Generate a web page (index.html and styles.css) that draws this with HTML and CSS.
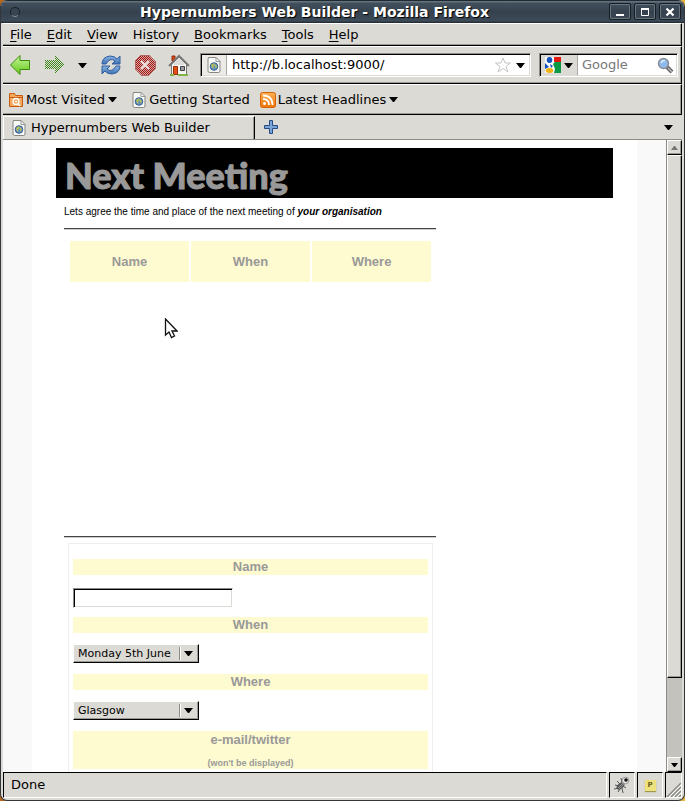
FILE: index.html
```html
<!DOCTYPE html>
<html lang="en">
<head>
<meta charset="utf-8">
<title>Hypernumbers Web Builder</title>
<link rel="stylesheet" href="styles.css">
</head>
<body>
<svg class="defs" aria-hidden="true">
  <defs>
    <linearGradient id="green" x2="0" y2="1"><stop stop-color="#c8f59a"/><stop offset="1" stop-color="#62c818"/></linearGradient>
    <linearGradient id="blue" x2="0" y2="1"><stop stop-color="#8cb3e0"/><stop offset="1" stop-color="#3c70b4"/></linearGradient>
    <linearGradient id="orange" x2="0" y2="1"><stop stop-color="#ffb056"/><stop offset="1" stop-color="#ee7406"/></linearGradient>
    <pattern id="greendots" width="2" height="2" patternUnits="userSpaceOnUse"><path d="M0 0h1v1h-1zM1 1h1v1h-1z" fill="#3f8a1c"/></pattern>
    <pattern id="reddots" width="2" height="2" patternUnits="userSpaceOnUse"><path d="M0 0h1v1H0zM1 1h1v1H1z" fill="#a01414"/></pattern>
    <symbol id="caret" viewBox="0 0 9 5"><path d="M0 0h9L5 5H4z"/></symbol>
    <symbol id="page" viewBox="0 0 14 16">
      <path d="M1.500 .5h7.500l4 4v9.500q0 1.500-1.500 1.500h-9q-1.500 0-1.500-1.500V2q0-1.500 1.500-1.500z" fill="#f8f8f6" stroke="#858783"/>
      <path d="M9 .5v4h4z" fill="#fff" stroke="#999b97"/>
      <circle cx="7" cy="9.500" r="3.800" fill="#5f8fc4" stroke="#3a5f92"/>
      <path d="M4 8l3-2 1 2-2 2 1 2-2-1zM8 7l2 2-1 3-1-2z" fill="#b2bf58"/>
    </symbol>
  </defs>
</svg>
<div class="window">
  <header class="titlebar">
    <span class="orb"></span>
    <h1 class="title">Hypernumbers Web Builder - Mozilla Firefox</h1>
    <div class="winbuttons">
      <button type="button" aria-label="Minimize"><svg width="12" height="12"><path d="M2 8h8v2H2z" fill="#fff"/></svg></button>
      <button type="button" aria-label="Maximize"><svg width="12" height="12"><path d="M2.500 2.500h7v7h-7z" fill="none" stroke="#fff"/><path d="M2 2h8v2H2z" fill="#fff"/></svg></button>
      <button type="button" aria-label="Close"><svg width="12" height="12"><path d="M2.500 2.500l7 7M9.500 2.500l-7 7" stroke="#fff" stroke-width="2.200"/></svg></button>
    </div>
  </header>

  <nav class="bar menubar">
    <button type="button"><u>F</u>ile</button>
    <button type="button"><u>E</u>dit</button>
    <button type="button"><u>V</u>iew</button>
    <button type="button">Hi<u>s</u>tory</button>
    <button type="button"><u>B</u>ookmarks</button>
    <button type="button"><u>T</u>ools</button>
    <button type="button"><u>H</u>elp</button>
  </nav>

  <div class="bar toolbar">
    <div class="navbuttons">
      <button type="button" aria-label="Back"><svg width="22" height="22"><path d="M1.500 11L11 1.500v5h9.500v9H11v5z" fill="url(#green)" stroke="#3c8a0c" stroke-linejoin="round"/></svg></button>
      <button type="button" aria-label="Forward"><svg width="22" height="22" shape-rendering="crispEdges"><path d="M21 11L12 1v5H2v9h10v6z" fill="url(#greendots)"/></svg></button>
      <button type="button" class="small" aria-label="History list"><svg width="9" height="5"><use href="#caret"/></svg></button>
      <button type="button" aria-label="Reload"><svg width="22" height="22">
        <path d="M2 10Q2 3 10 2q5 0 7 3l3-3v8h-8l3-3Q10 3 6 10z" fill="url(#blue)" stroke="#2f5f9f" stroke-linejoin="round"/>
        <path d="M20 12q0 7-8 8-5 0-7-3l-3 3v-8h8l-3 3q5 4 9-3z" fill="url(#blue)" stroke="#2f5f9f" stroke-linejoin="round"/></svg></button>
      <button type="button" aria-label="Stop"><svg width="22" height="22"><path d="M7 1h8l6 6v8l-6 6H7l-6-6V7z" fill="#d9a8a2"/><path d="M7 1h8l6 6v8l-6 6H7l-6-6V7z" fill="url(#reddots)" stroke="#b06a66" shape-rendering="crispEdges"/><path d="M7 7l8 8M15 7l-8 8" stroke="#ece2e0" stroke-width="2.200"/></svg></button>
      <button type="button" aria-label="Home"><svg width="22" height="22">
        <path d="M4 2h3v5H4z" fill="#d84818" stroke="#8f2c08"/>
        <path d="M3.500 10.500L11 3l7.500 7.500v10h-15z" fill="#f4f4f2" stroke="#777"/>
        <path d="M1 12L11 2l10 10" fill="none" stroke="#777" stroke-width="2"/>
        <path d="M6 9l5-5 5 5v2H6z" fill="#dcdcda"/>
        <path d="M5.500 12.500h4v8h-4z" fill="#e2501a" stroke="#9b3008"/><path d="M12.500 12.500h4v4h-4z" fill="#9aa0a4" stroke="#444"/>
        <path d="M2 21h4M10 21h10" stroke="#83b44c" stroke-width="2"/></svg></button>
    </div>
    <div class="sunken address">
      <span class="fieldicon"><svg width="14" height="16"><use href="#page"/></svg></span>
      <input type="text" aria-label="Address" value="http://b.localhost:9000/">
      <svg width="16" height="16"><path d="M8 1l2 5h5.500l-4.500 3.500 2 5.500-5-3.500L3 15l2-5.500L.5 6H6z" fill="#fff" stroke="#c4c4c4"/></svg>
      <svg width="9" height="5"><use href="#caret"/></svg>
    </div>
    <div class="sunken search">
      <span class="fieldicon engine">
        <svg width="16" height="16"><path d="M0 0h16v16H0z" fill="#fff"/><path d="M9 0h7v5H9z" fill="#e01b12"/><path d="M8 7l2-2h6v11H9l1-4z" fill="#0b9a45"/><ellipse cx="4.500" cy="3" rx="2.800" ry="3" fill="#1453bd"/><path d="M0 6l4 4-4 2z" fill="#1453bd"/><ellipse cx="4.500" cy="13.500" rx="3.800" ry="2.500" fill="#f0b414"/><path d="M5 7l3 2-2 2z" fill="#1453bd"/></svg>
        <svg width="9" height="5"><use href="#caret"/></svg>
      </span>
      <input type="text" aria-label="Search" placeholder="Google">
      <svg width="17" height="17"><path d="M10 10l5 5" stroke="#666" stroke-width="4"/><path d="M11 11l4 4" stroke="#b8b8b8" stroke-width="1.500"/><circle cx="6.500" cy="6.500" r="5" fill="#8db9ed" stroke="#8b8f94" stroke-width="1.500"/><path d="M4 6q1-3 4-2" stroke="#dcebfb" stroke-width="1.500" fill="none"/></svg>
    </div>
  </div>

  <nav class="bar bookmarks">
    <button type="button"><svg width="16" height="16"><path d="M1.500 14.500v-13h5l1 2h7v11z" fill="#f4a860" stroke="#c85a0c"/><path d="M1 5.500h13" stroke="#c85a0c"/><circle cx="8" cy="9.500" r="3" fill="none" stroke="#fff" stroke-width="1.300"/><path d="M10 12l2 2" stroke="#fff" stroke-width="1.500"/><circle cx="8" cy="9.500" r="1" fill="#fff"/></svg><span>Most Visited</span><svg class="more" width="9" height="5"><use href="#caret"/></svg></button>
    <a href="#start"><svg width="16" height="16"><use href="#page"/></svg><span>Getting Started</span></a>
    <button type="button"><svg width="16" height="16"><rect x=".5" y=".5" width="15" height="15" rx="2" fill="url(#orange)" stroke="#d4640a"/><circle cx="4.500" cy="11.500" r="1.500" fill="#fff"/><path d="M3 7q6 0 6 6M3 3.500q9.500 0 9.500 9.500" fill="none" stroke="#fff" stroke-width="1.800"/></svg><span>Latest Headlines</span><svg class="more" width="9" height="5"><use href="#caret"/></svg></button>
  </nav>

  <div class="tabs">
    <button type="button" class="tab"><svg width="14" height="16"><use href="#page"/></svg><span>Hypernumbers Web Builder</span></button>
    <button type="button" class="newtab" aria-label="New tab"><svg width="15" height="15"><path d="M5.500 .5h3v5h5v3h-5v5h-3v-5h-5v-3h5z" fill="#79a4d8" stroke="#254b85"/></svg></button>
    <button type="button" class="alltabs" aria-label="All tabs"><svg width="9" height="5"><use href="#caret"/></svg></button>
  </div>

  <div class="viewport">
    <main class="sheet">
      <h2 class="banner">Next Meeting</h2>
      <div class="column">
        <p class="intro">Lets agree the time and place of the next meeting of <strong><em>your organisation</em></strong></p>
        <hr>
        <table class="entries">
          <thead><tr><th>Name</th><th>When</th><th>Where</th></tr></thead>
        </table>
        <hr>
        <form class="reply">
          <label for="name">Name</label>
          <input type="text" id="name">
          <label for="when">When</label>
          <span class="dropdown"><select id="when"><option>Monday 5th June</option></select><span class="arrow"><svg width="9" height="5"><use href="#caret"/></svg></span></span>
          <label for="where">Where</label>
          <span class="dropdown"><select id="where"><option>Glasgow</option></select><span class="arrow"><svg width="9" height="5"><use href="#caret"/></svg></span></span>
          <div class="contact">e-mail/twitter<small>(won't be displayed)</small></div>
        </form>
      </div>
    </main>
    <div class="scrollbar">
      <button type="button" aria-label="Scroll up"><svg class="dim" width="7" height="4"><path d="M3 0h1l3 4H0z"/></svg></button>
      <div class="thumb"></div>
      <div class="track"></div>
      <button type="button" aria-label="Scroll down"><svg width="7" height="4"><path d="M0 0h7L4 4H3z"/></svg></button>
    </div>
    <svg class="pointer" width="14" height="21"><path d="M1.500 1v16l3.500-3 2.500 5.500 3-1.500-2.500-5h5z" fill="#fff" stroke="#111" stroke-width="1.300"/></svg>
  </div>

  <footer class="status">
    <div class="cell message">Done</div>
    <div class="cell"><svg width="18" height="18"><path d="M2 9l4 1M4 5l3 3M8 2l1 5M1 13l5-1M5 16l2-3M10 17l-1-5M13 12l-3-2" stroke="#555"/><ellipse cx="7.500" cy="10" rx="4.500" ry="2.800" transform="rotate(-42 7.500 10)" fill="#555"/><path d="M5 12l5-5M6 13l5-5" stroke="#aaa" stroke-width=".7"/><circle cx="12.500" cy="4.500" r="3.300" fill="#e4e4e0" stroke="#999"/><circle cx="13" cy="4" r="1.800" fill="#111"/></svg></div>
    <div class="cell"><span class="note">P</span></div>
    <div class="cell grip"><svg width="15" height="15"><path d="M1 15L15 1M5 15L15 5M9 15l6-6M13 15l2-2" stroke="#8b8b86" stroke-width="1.500"/><path d="M2 16L16 2M6 16L16 6M10 16l6-6" stroke="#fff"/></svg></div>
  </footer>
</div>
</body>
</html>
```
FILE: styles.css
```css
* { box-sizing: border-box; }

body {
  margin: 0;
  background: linear-gradient(90deg, #b8661c, #e8b43c);
  font: 13px/16px "DejaVu Sans", sans-serif;
  color: #000;
}

svg { display: block; flex: none; }
.defs { position: absolute; width: 0; height: 0; }

button {
  font: inherit;
  color: inherit;
  border: 0;
  padding: 0;
  background: none;
}

input { font: inherit; min-width: 0; }

.window {
  display: flex;
  flex-direction: column;
  height: 100vh;
  padding: 0 2px 2px;
  background: #dcdad5;
  border: solid #33373b;
  border-width: 0 1px 1px;
  border-radius: 7px;
  overflow: hidden;
}

.titlebar {
  display: flex;
  align-items: center;
  flex: none;
  height: 23px;
  margin: 0 -2px;
  padding: 0 3px 0 9px;
  background: linear-gradient(#1f2a33 0 1px, #65727d 1px 2px, #42505e 3px, #35424e 12px, #3d4a57 21px, #1d242a);
  color: #fff;
}

.orb {
  width: 10px;
  height: 10px;
  border-radius: 50%;
  border: 1px solid #1a2229;
  border-bottom-color: #8695a1;
  background: #394550;
}

.title {
  flex: 1;
  margin: 0;
  text-align: center;
  font-size: 14px;
  line-height: 20px;
  text-shadow: 1px 1px 1px #000;
}

.winbuttons { display: flex; gap: 3px; }

.winbuttons button {
  display: grid;
  place-items: center;
  width: 22px;
  height: 17px;
  border: 1px solid #161d23;
  border-radius: 2px;
  box-shadow: inset 0 0 0 1px #687681;
}

.bar {
  display: flex;
  align-items: center;
  flex: none;
  border: solid;
  border-width: 1px 1px 1px 0;
  border-color: #fff #000 #000;
  box-shadow: inset -1px -1px #9c9a94;
}

.menubar { height: 23px; padding-left: 7px; gap: 15px; }
.menubar u { text-underline-offset: 2px; }

.toolbar { height: 38px; padding: 0 3px 0 6px; gap: 8px; }
.navbuttons { display: flex; align-items: center; gap: 12px; margin-right: 2px; }
.navbuttons .small { margin: 0 1px; }

.sunken {
  display: flex;
  align-items: center;
  height: 24px;
  padding-right: 5px;
  background: #fff;
  border: 1px solid;
  border-color: #8d8b86 #fff #fff #8d8b86;
  box-shadow: inset 1px 1px #000, inset -1px -1px #dcdad5;
}

.sunken input {
  flex: 1;
  border: 0;
  padding: 0 4px;
  background: none;
  outline: 0;
}

.sunken input::placeholder { color: #777; opacity: 1; }

.fieldicon {
  display: flex;
  align-items: center;
  justify-content: center;
  gap: 3px;
  align-self: stretch;
  width: 25px;
  margin: 1px 0 1px 1px;
  background: #ecebe8;
  border-right: 1px solid #aaa8a3;
}

.address { flex: 1; gap: 1px; }
.address > svg:nth-of-type(1) { margin-right: 4px; }
.search { width: 139px; padding-right: 3px; }
.engine { flex: none; width: 37px; background: #dcdad5; }

.bookmarks { height: 31px; padding-left: 5px; gap: 10px; }
.bookmarks > * { display: flex; align-items: center; gap: 2px; color: #000; text-decoration: none; }
.more { margin: 0 4px 0 1px; }

.tabs {
  display: flex;
  align-items: stretch;
  flex: none;
  height: 25px;
  border-bottom: 1px solid #8d8b86;
}

.tab {
  display: flex;
  align-items: center;
  gap: 5px;
  width: 252px;
  margin-top: 1px;
  padding-left: 8px;
  border: solid;
  border-width: 1px 1px 0 1px;
  border-color: #fff #000 #fff #fff;
  box-shadow: inset -1px 0 #9c9a94;
}

.newtab { margin-left: 9px; }
.alltabs { margin-left: auto; padding-right: 9px; }

.viewport {
  position: relative;
  display: flex;
  flex: 1;
  min-height: 0;
  overflow: hidden;
  background: #f9f9f9;
}

.sheet {
  flex: 1;
  margin: 0 29px;
  padding: 8px 24px 0;
  background: #fff;
  font-family: "Liberation Sans", sans-serif;
}

.banner {
  margin: 0;
  height: 50px;
  padding-left: 9px;
  background: #000;
  color: #999;
  font: 900 36px/54px Lato, sans-serif;
  -webkit-text-stroke: 1px #999;
}

.column { width: 372px; margin-left: 8px; }
.intro { margin: 8px 0 10px; font-size: 10px; line-height: 12px; }

hr {
  margin: 0;
  height: 2px;
  border: 0;
  border-top: 1px solid #444;
  background: #ccc;
}

.entries {
  width: 365px;
  margin: 9px 0 252px 4px;
  border-spacing: 2px;
  table-layout: fixed;
}

.entries th { height: 41px; padding: 0; }

.entries th,
.reply label,
.contact {
  background: #fffbd0;
  color: #999;
  font-size: 13px;
  font-weight: bold;
  text-align: center;
}

.reply {
  display: flex;
  flex-direction: column;
  align-items: flex-start;
  margin: 5px 3px 0 4px;
  padding: 15px 4px 8px;
  border: 1px solid #eee;
}

.reply label { align-self: stretch; line-height: 16px; }

.reply input {
  width: 160px;
  height: 20px;
  margin: 13px 0 9px;
  border: 1px solid;
  border-color: #8d8b86 #fff #fff #8d8b86;
  box-shadow: inset 1px 1px #000, inset -1px -1px #dcdad5;
}

.dropdown { position: relative; width: 126px; margin: 11px 0; }

.dropdown select {
  display: block;
  width: 100%;
  height: 19px;
  padding: 0 24px 0 4px;
  appearance: none;
  background: #dcdad5;
  border: 1px solid;
  border-color: #fff #000 #000 #fff;
  border-radius: 0;
  box-shadow: inset -1px -1px #9c9a94;
  font: 11px/16px "DejaVu Sans", sans-serif;
  color: #000;
}

.arrow {
  position: absolute;
  top: 3px;
  right: 6px;
  padding: 4px 0 4px 4px;
  border-left: 1px solid #8d8b86;
  box-shadow: inset 1px 0 #fff;
  pointer-events: none;
}

.contact { align-self: stretch; line-height: 18px; }
.contact small { display: block; margin-top: 8px; font-size: 9px; line-height: 12px; }

.scrollbar {
  display: flex;
  flex-direction: column;
  width: 16px;
  background: #c4c2bd;
  border-left: 1px solid #8d8b86;
}

.scrollbar button,
.thumb {
  display: grid;
  place-items: center;
  height: 15px;
  background: #dcdad5;
  border: 1px solid;
  border-color: #fff #000 #000 #fff;
  box-shadow: inset -1px -1px #9c9a94;
}

.scrollbar .thumb { flex: 523; height: auto; }
.track { flex: 79; }
.dim { fill: #777; }

.pointer { position: absolute; left: 161px; top: 178px; }

.status {
  display: flex;
  flex: none;
  gap: 2px;
  height: 26px;
}

.cell {
  display: grid;
  place-items: center;
  width: 26px;
  border: 1px solid;
  border-color: #000 #fff #fff #000;
}

.cell.message { flex: 1; place-items: center start; padding-left: 7px; }
.cell.grip { width: 17px; place-items: end; }

.note {
  width: 11px;
  height: 11px;
  background: #efe27c;
  box-shadow: 0 1px 1px #a09850;
  color: #6b6325;
  font-size: 7px;
  line-height: 11px;
  font-weight: bold;
  text-align: center;
}
```
